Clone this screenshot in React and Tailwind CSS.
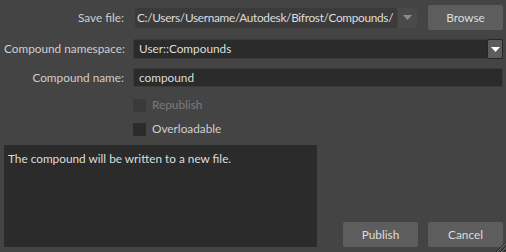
import React from 'react';

const Arrow = ({ color }) => (
  <svg width="9" height="5" viewBox="0 0 9 5">
    <path d="M0 0 H9 L4.5 5 Z" fill={color} />
  </svg>
);

function Checkbox({ label, disabled }) {
  return (
    <div className="flex items-center h-[16px]">
      <div className="w-[120px]" />
      <div
        className={
          'ml-[9px] w-[13px] h-[13px] rounded-[1px] ' +
          (disabled ? 'bg-[#3a3a3a]' : 'bg-[#2b2b2b]')
        }
      />
      <span className={'ml-[6px] ' + (disabled ? 'text-[#7b7b7b]' : 'text-[#cfcfcf]')}>
        {label}
      </span>
    </div>
  );
}

export default function App() {
  return (
    <div className="relative w-[506px] h-[252px] overflow-hidden bg-[#444444] text-[11.8px] leading-none font-['Lato',sans-serif] text-[#cfcfcf] pl-[4px] pr-[3px] pt-[5px] whitespace-nowrap">
      {/* save file */}
      <div className="flex items-center h-[25px]">
        <div className="w-[120px] text-right">Save file:</div>
        <div className="ml-[11px] flex h-[20px] w-[282px] rounded-[2px] bg-[#3b3b3b] overflow-hidden">
          <div className="flex-1 flex items-center pl-[2px] text-[#dddddd] tracking-[-0.3px] overflow-hidden">
            C:/Users/Username/Autodesk/Bifrost/Compounds/
          </div>
          <div className="w-[20px] shrink-0 flex items-center justify-center bg-[#4a4a4a] border-l border-[#444444]">
            <Arrow color="#8c8c8c" />
          </div>
        </div>
        <button className="ml-[11px] w-[75px] h-[25px] rounded-[2px] bg-[#5d5d5d] text-[#dddddd]">
          Browse
        </button>
      </div>

      {/* namespace */}
      <div className="flex items-center h-[20px] mt-[9px]">
        <div className="w-[120px] text-right">Compound namespace:</div>
        <div className="ml-[9px] flex h-[20px] flex-1 rounded-[2px] bg-[#2b2b2b] border border-[#3a3a3a]">
          <div className="flex-1 flex items-center pl-[5px] text-[#dddddd]">User::Compounds</div>
          <div className="w-[16px] -my-[1px] -mr-[1px] flex items-center justify-center rounded-[2px] bg-[#5d5d5d] border border-[#262626]">
            <Arrow color="#ffffff" />
          </div>
        </div>
      </div>

      {/* name */}
      <div className="flex items-center h-[19px] mt-[9px]">
        <div className="w-[120px] text-right">Compound name:</div>
        <div className="ml-[9px] flex items-center h-[19px] flex-1 rounded-[2px] bg-[#2b2b2b] border border-[#3a3a3a] pl-[5px] text-[#dddddd]">
          compound
        </div>
      </div>

      <div className="mt-[10px]">
        <Checkbox label="Republish" disabled />
      </div>
      <div className="mt-[8px]">
        <Checkbox label="Overloadable" />
      </div>

      {/* message + buttons */}
      <div className="flex items-end mt-[8px] h-[102px]">
        <div className="w-[313px] h-full bg-[#2b2b2b] px-[4px] pt-[8px] text-[#dddddd]">
          The compound will be written to a new file.
        </div>
        <button className="ml-[26px] w-[75px] h-[25px] rounded-[2px] bg-[#5d5d5d] text-[#dddddd]">
          Publish
        </button>
        <button className="ml-[10px] w-[75px] h-[25px] rounded-[2px] bg-[#5d5d5d] text-[#dddddd]">
          Cancel
        </button>
      </div>

      {/* resize grip */}
      <svg className="absolute right-0 bottom-0" width="12" height="12" viewBox="0 0 12 12">
        <path d="M12 2 L2 12 M12 6 L6 12 M12 10 L10 12" stroke="#262626" strokeWidth="1" />
        <path d="M12 3 L3 12 M12 7 L7 12" stroke="#6a6a6a" strokeWidth="1" />
      </svg>
    </div>
  );
}
